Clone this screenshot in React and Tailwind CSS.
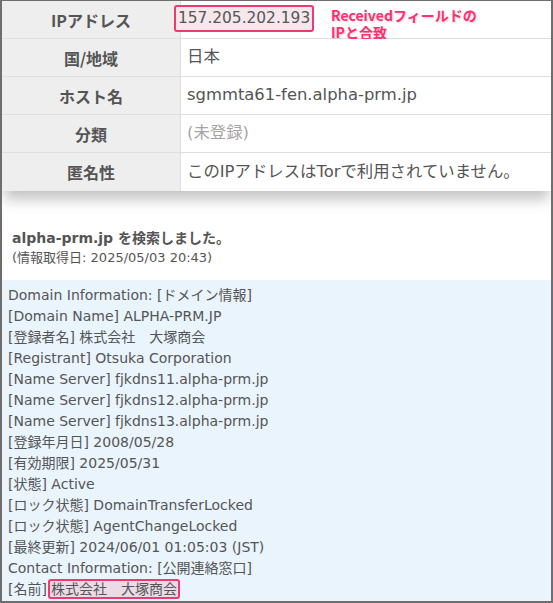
import React from "react";

const rows = [
  { label: "IPアドレス", value: "157.205.202.193", ip: true },
  { label: "国/地域", value: "日本" },
  { label: "ホスト名", value: "sgmmta61-fen.alpha-prm.jp" },
  { label: "分類", value: "(未登録)", muted: true },
  { label: "匿名性", value: "このIPアドレスはTorで利用されていません。" },
];

const whois = [
  "Domain Information: [ドメイン情報]",
  "[Domain Name] ALPHA-PRM.JP",
  "[登録者名] 株式会社　大塚商会",
  "[Registrant] Otsuka Corporation",
  "[Name Server] fjkdns11.alpha-prm.jp",
  "[Name Server] fjkdns12.alpha-prm.jp",
  "[Name Server] fjkdns13.alpha-prm.jp",
  "[登録年月日] 2008/05/28",
  "[有効期限] 2025/05/31",
  "[状態] Active",
  "[ロック状態] DomainTransferLocked",
  "[ロック状態] AgentChangeLocked",
  "[最終更新] 2024/06/01 01:05:03 (JST)",
  "Contact Information: [公開連絡窓口]",
];

const font = "font-['DejaVu_Sans','Noto_Sans_CJK_JP',sans-serif]";

export default function App() {
  return (
    <div
      className={`w-[553px] h-[603px] overflow-hidden bg-white border-t border-x-2 border-b-2 border-[#6e6e6e] flex flex-col text-[#555] ${font}`}
    >
      {/* ip table */}
      <div className="flex flex-col shadow-[0_10px_14px_-2px_rgba(0,0,0,0.25)] relative z-10">
        {rows.map((r, i) => (
          <div
            key={r.label}
            className={`grid grid-cols-[179px_1fr] h-[38px] ${
              i < rows.length - 1 ? "border-b border-[#dedede]" : ""
            }`}
          >
            <div className="bg-[#eeeeee] border-r border-[#dedede] flex items-center justify-center font-bold text-[16px] font-['Noto_Sans_CJK_JP',sans-serif]">
              {r.label}
            </div>
            <div className="bg-white flex items-center pl-[6px] relative">
              {r.ip ? (
                <>
                  <span className="border-2 border-[#ee3a6e] bg-[#f6e7ec] rounded-[3px] px-[2px] leading-[23px] text-[15.4px] -ml-[13px] -mt-[2px]">
                    {r.value}
                  </span>
                  <div className="absolute left-[150px] top-[6px] flex flex-col text-[#ff2f74] font-bold text-[14px] leading-[17px] font-['Noto_Sans_CJK_JP',sans-serif] [text-shadow:1px_1px_2px_rgba(0,0,0,0.18)]">
                    <span>Receivedフィールドの</span>
                    <span>IPと合致</span>
                  </div>
                </>
              ) : (
                <span
                  className={`text-[16.4px] ${r.muted ? "text-[#a5a5a5]" : ""}`}
                >
                  {r.value}
                </span>
              )}
            </div>
          </div>
        ))}
      </div>

      {/* search result */}
      <div className="pt-[37px] pl-[10px] mb-[12px]">
        <div className="font-bold text-[14px] leading-[20px]">
          alpha-prm.jp を検索しました。
        </div>
        <div className="text-[13px] leading-[20px]">
          (情報取得日: 2025/05/03 20:43)
        </div>
      </div>

      {/* whois */}
      <div className="flex-1 bg-[#e9f4fd] pl-[6px] pt-[5px] text-[14px] leading-[21px]">
        {whois.map((l, i) => (
          <div key={i} className="whitespace-pre">
            {l}
          </div>
        ))}
        <div className="whitespace-pre">
          [名前]
          <span className="border-2 border-[#ee3a6e] bg-[#eadbe6] rounded-[3px] px-[1px] ml-[1px]">
            株式会社　大塚商会
          </span>
        </div>
      </div>
    </div>
  );
}
